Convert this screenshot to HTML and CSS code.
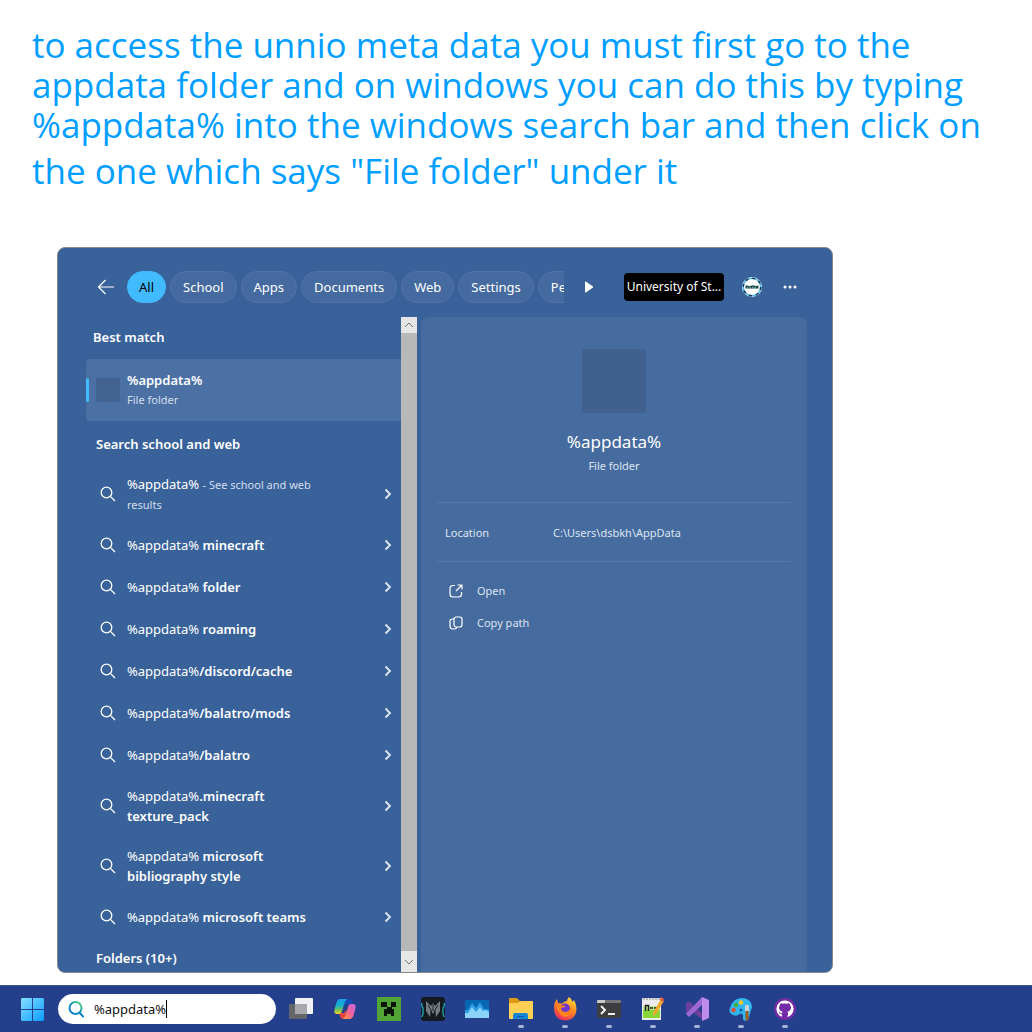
FILE: index.html
```html
<!DOCTYPE html>
<html lang="en">
<head>
<meta charset="utf-8">
<title>Opening the AppData folder</title>
<link rel="stylesheet" href="styles.css">
</head>
<body>
<svg class="defs" width="0" height="0" aria-hidden="true">
  <symbol id="search" viewBox="0 0 16 16"><circle cx="6.5" cy="6.5" r="5.3"/><path d="M10.4 10.4 15 15"/></symbol>
  <symbol id="chevron" viewBox="0 0 8 12"><path d="m1.5 1.5 4.500 4.500-4.500 4.500"/></symbol>
</svg>

<header class="caption">
  <p>to access the unnio meta data you must first go to the<br>appdata folder and on windows you can do this by typing<br>%appdata% into the windows search bar and then click on</p>
  <p class="caption-last">the one which says "File folder" under it</p>
</header>

<main class="window">
  <div class="toolbar">
    <button class="icon-button back" aria-label="Back"><svg width="18" height="16" viewBox="0 0 18 16"><path d="M17 8H1.500M8.500 1 1.500 8l7 7"/></svg></button>
    <nav class="tabs" aria-label="Filters">
      <button class="tab active">All</button>
      <button class="tab">School</button>
      <button class="tab">Apps</button>
      <button class="tab">Documents</button>
      <button class="tab">Web</button>
      <button class="tab">Settings</button>
      <button class="tab">People</button>
    </nav>
    <button class="icon-button next" aria-label="More filters"><svg width="10" height="12" viewBox="0 0 10 12"><path d="M1 1.500v9q0 1.300 1.200.7l6.500-4.500q.9-.7 0-1.400L2.200.8Q1 .2 1 1.500z"/></svg></button>
    <button class="account">University of St...</button>
    <svg class="avatar" width="20" height="20" viewBox="0 0 20 20" role="img" aria-label="Profile">
      <circle cx="10" cy="10" r="10" fill="#fff"/>
      <circle cx="10" cy="10" r="8.800" fill="none" stroke="#4bb8e6" stroke-width="1.600"/>
      <circle cx="10" cy="10" r="8.800" fill="none" stroke="#123d59" stroke-width="1.600" stroke-dasharray="3 3.900"/>
      <path fill="#174c4a" d="M3.500 8.500h2l2 .8 2-.8h3l1.500.6 2.500-.6v3h-13z"/><path stroke="#cfe5e0" stroke-width=".6" d="M5 10.300h10" stroke-dasharray="1.500 1"/>
    </svg>
    <button class="icon-button more" aria-label="More options"><svg width="14" height="4" viewBox="0 0 14 4"><circle cx="2" cy="2" r="1.500"/><circle cx="7" cy="2" r="1.500"/><circle cx="12" cy="2" r="1.500"/></svg></button>
  </div>

  <div class="panes">
    <section class="results">
      <h2 class="group best">Best match</h2>
      <a class="match" href="#">
        <span class="thumb"></span>
        <span class="match-text"><strong>%appdata%</strong><small>File folder</small></span>
      </a>
      <h2 class="group web">Search school and web</h2>
      <ul class="suggestions">
        <li><a class="row" href="#"><svg class="glass"><use href="#search"/></svg><span class="label">%appdata% <small>- See school and web results</small></span><svg class="chevron"><use href="#chevron"/></svg></a></li>
        <li><a class="row" href="#"><svg class="glass"><use href="#search"/></svg><span class="label">%appdata% <b>minecraft</b></span><svg class="chevron"><use href="#chevron"/></svg></a></li>
        <li><a class="row" href="#"><svg class="glass"><use href="#search"/></svg><span class="label">%appdata% <b>folder</b></span><svg class="chevron"><use href="#chevron"/></svg></a></li>
        <li><a class="row" href="#"><svg class="glass"><use href="#search"/></svg><span class="label">%appdata% <b>roaming</b></span><svg class="chevron"><use href="#chevron"/></svg></a></li>
        <li><a class="row" href="#"><svg class="glass"><use href="#search"/></svg><span class="label">%appdata%<b>/discord/cache</b></span><svg class="chevron"><use href="#chevron"/></svg></a></li>
        <li><a class="row" href="#"><svg class="glass"><use href="#search"/></svg><span class="label">%appdata%<b>/balatro/mods</b></span><svg class="chevron"><use href="#chevron"/></svg></a></li>
        <li><a class="row" href="#"><svg class="glass"><use href="#search"/></svg><span class="label">%appdata%<b>/balatro</b></span><svg class="chevron"><use href="#chevron"/></svg></a></li>
        <li><a class="row" href="#"><svg class="glass"><use href="#search"/></svg><span class="label">%appdata%<b>.minecraft<br>texture_pack</b></span><svg class="chevron"><use href="#chevron"/></svg></a></li>
        <li><a class="row" href="#"><svg class="glass"><use href="#search"/></svg><span class="label">%appdata% <b>microsoft<br>bibliography style</b></span><svg class="chevron"><use href="#chevron"/></svg></a></li>
        <li><a class="row" href="#"><svg class="glass"><use href="#search"/></svg><span class="label">%appdata% <b>microsoft teams</b></span><svg class="chevron"><use href="#chevron"/></svg></a></li>
      </ul>
      <h2 class="group folders">Folders (10+)</h2>
    </section>

    <div class="scrollbar">
      <button class="scroll-up" aria-label="Scroll up"><svg width="10" height="6" viewBox="0 0 10 6"><path d="m1 5 4-4 4 4"/></svg></button>
      <button class="scroll-down" aria-label="Scroll down"><svg width="10" height="6" viewBox="0 0 10 6"><path d="m1 1 4 4 4-4"/></svg></button>
    </div>

    <section class="details">
      <div class="preview"></div>
      <h1>%appdata%</h1>
      <p class="kind">File folder</p>
      <dl class="facts"><dt>Location</dt><dd>C:\Users\dsbkh\AppData</dd></dl>
      <div class="actions">
        <button class="action"><svg width="14" height="14" viewBox="0 0 14 14"><path d="M6 1.500H4Q1 1.500 1 4.500v5.500q0 3 3 3h5.500q3 0 3-3V8M8.500 1H13v4.500M13 1 7 7"/></svg>Open</button>
        <button class="action"><svg width="14" height="14" viewBox="0 0 14 14"><rect x="5" y="1" width="8" height="10" rx="2.200"/><path d="M5 3H3.500Q1 3 1 5.500V10q0 3 3 3h1.500q1.800 0 2.500-2"/></svg>Copy path</button>
      </div>
    </section>
  </div>
</main>

<footer class="taskbar">
  <button class="start" aria-label="Start"><svg width="24" height="24" viewBox="0 0 24 24"><defs><linearGradient id="win" x2="1" y2="1" gradientUnits="userSpaceOnUse" x1="0" y1="0" gradientTransform="scale(24)"><stop stop-color="#8be3ff"/><stop offset="1" stop-color="#0a9cff"/></linearGradient></defs><path fill="url(#win)" d="M2 1H12V12H1V2zM13 1H23l1 1v10H13zM1 13h11v11H2l-1-1zM13 13h11v10l-1 1H13z"/></svg></button>
  <label class="searchbox">
    <svg width="16" height="17" viewBox="0 0 16 17"><defs><linearGradient id="lens" x1="1" x2="0" y1="0" y2="1"><stop stop-color="#6be07a"/><stop offset=".4" stop-color="#1aa0a8"/><stop offset="1" stop-color="#1377dd"/></linearGradient></defs><circle cx="7.500" cy="7" r="6" fill="none" stroke="url(#lens)" stroke-width="2"/><path d="m11.500 11.500 3.500 4" stroke="#1583cf" stroke-width="2" stroke-linecap="round"/></svg>
    <input type="text" value="%appdata%" aria-label="Search"><span class="caret"></span>
  </label>
  <nav class="apps" aria-label="Taskbar apps">
    <button class="app" aria-label="Task view"><svg viewBox="0 0 24 24"><rect x="6" y="1" width="18" height="16" rx="1" fill="#f2f2f4"/><rect y="7" width="18" height="15" rx="1" fill="#646569"/><path fill="#a9a9ad" d="M6 7h12v10H6z"/></svg></button>
    <button class="app" aria-label="Copilot"><svg viewBox="0 0 24 24"><defs><linearGradient id="cp1" x2="0" y2="1"><stop stop-color="#189bea"/><stop offset=".45" stop-color="#18b4c9"/><stop offset=".75" stop-color="#7cc34a"/><stop offset="1" stop-color="#ffd22e"/></linearGradient><linearGradient id="cp2" x1="1" x2="0" y2="1"><stop stop-color="#c269e8"/><stop offset=".5" stop-color="#f0609a"/><stop offset="1" stop-color="#ff9b35"/></linearGradient></defs><path fill="#144cb8" d="M12 2h4q2 0 2.700 2l1 3H15q-3 0-4 3z"/><path fill="#e24440" d="M6 16h5l2-3v6l-1 3H10q-2 0-2.700-2z"/><path fill="url(#cp1)" d="M7 2h7q-1.500 1-2.300 3.500L9 14q-.8 3-3.500 3H3.500Q.5 16.500 1.500 12.500l2-7Q4.500 2 7 2z"/><path fill="url(#cp2)" d="M17 22h-7q1.500-1 2.300-3.500L15 10q.8-3 3.500-3h2q3 .5 2 4.500l-2 7Q19.500 22 17 22z"/></svg></button>
    <button class="app" aria-label="Minecraft"><svg viewBox="0 0 24 24"><path fill="#52a436" d="M0 0h24v24H0z"/><path fill="#071406" d="M4 5h6v5h4V5h5v5h-4v2h2v7h-3v-2h-4v2H7v-7h3v-2H4z"/></svg></button>
    <button class="app" aria-label="PredatorSense"><svg viewBox="0 0 24 24"><rect width="24" height="24" rx="3" fill="#141a20"/><path stroke="#1fb8c4" stroke-width="1.200" d="M.8 6v3l1.200 2v6l-1.200 3M23.200 6v3L22 11v6l1.200 3" fill="none"/><path fill="#777c82" d="m5 4 5 5 2-3 2 3 5-5v10l-4 6-1-7-2 4-2-4-1 7-4-6z"/><path stroke="#20262c" d="m7 8 3 5v4M17 8l-3 5v4M12 7v7" fill="none"/></svg></button>
    <button class="app" aria-label="System monitor"><svg viewBox="0 0 24 24"><rect y="3" width="24" height="18" rx="1" fill="#0867b5"/><path fill="#2b9be2" d="M0 13h3l4-7 4 5 4-6 4 7h5v5H0z"/><path fill="#8bd2fa" d="M0 16h3l4-6 4 5 4-5 3 4 3-1 3 2v6H0z"/></svg></button>
    <button class="app running" aria-label="File Explorer"><svg viewBox="0 0 24 24"><path fill="#dc9b12" d="M0 2q0-1 1-1h7l3 3h12v7H0z"/><path fill="#ffd053" d="M0 6h9l3-2h11q1 0 1 1v16q0 1-1 1H1q-1 0-1-1z"/><path fill="#1687d4" d="M4 22v-4q0-2 2-2h11q2 0 2 2v4z"/><path fill="#0b55a4" d="M8 19h7v1H8z"/></svg></button>
    <button class="app running" aria-label="Firefox"><svg viewBox="0 0 24 24"><defs><linearGradient id="fox" x1=".8" x2=".3" y2="1"><stop stop-color="#ffe23e"/><stop offset=".45" stop-color="#ff8a20"/><stop offset="1" stop-color="#f42962"/></linearGradient></defs><path fill="url(#fox)" d="M1 10Q1 5 4 2l1 4 4 .5Q11 4 14 4q0-2 2-4 3 2 3.500 5L21 3q2.500 4 2.500 9Q23 23 12 23.500 1 23 1 10z"/><circle cx="12" cy="11.500" r="5" fill="#6d38cc"/><path fill="#ff841c" d="M3 8q4 2 8 0l1 2-4 1q0 4 5 4 4-1 5-5 2 9-6 10-6-1-9-12z"/></svg></button>
    <button class="app running" aria-label="Terminal"><svg viewBox="0 0 24 24"><rect y="3" width="24" height="18" rx="1" fill="#3d3d3f"/><path fill="#c9c9c9" d="M0 4q0-1 1-1h7v3H0z"/><path fill="#77777a" d="M8 3h15q1 0 1 1v2H8z"/><path stroke="#eee" stroke-width="2" fill="none" d="m4 9 4 4-4 4M11 17h7"/></svg></button>
    <button class="app running" aria-label="Notepad++"><svg viewBox="0 0 24 24"><path fill="#ececec" d="M1 1h19v22H1z"/><path fill="#86d638" d="M2 13h17v8H2z"/><path fill="#bce98c" d="M2 9h17v4H2z"/><path stroke="#888" stroke-dasharray="2 1" d="M2 2h18"/><path stroke="#222" stroke-width="1.500" fill="none" d="M4.500 14V8.500h3V14M9 11h3M13 11h3"/><path fill="#f2a72e" d="m20 2 3 2-8 13-3 2 .5-4z"/><path fill="#df5a43" d="m20 0 3 2-1 3-3-2z"/></svg></button>
    <button class="app running" aria-label="Visual Studio"><svg viewBox="0 0 24 24"><path fill="#69409c" d="m1 6 3-2 14 13v6L5 13l-3 5-1-1z"/><path fill="#9b68d4" d="m1 17 16-17v8L4 20z"/><path fill="#bd8bea" d="m17 0 7 3v18l-7 3z"/></svg></button>
    <button class="app running" aria-label="Paint"><svg viewBox="0 0 24 24"><path fill="#31b6ed" d="M13 1c6 0 10 4 10 9l-4 13c-2 1-4 1-5-1v-4q-2-3-5 0-2 1-5 0-5-2-3-7Q4 1 13 1z"/><circle cx="7" cy="8" r="2.200" fill="#48ad35"/><circle cx="12" cy="5.500" r="2.200" fill="#ffc526"/><circle cx="4.500" cy="13" r="2.200" fill="#e94f32"/><circle cx="12" cy="13" r="1.500" fill="#12599e"/><path fill="#c8d0d7" d="M16 8h4v6h-4z"/><path fill="#a05c1f" d="M16.500 14h3v8q-1.500 4-3 0z"/></svg></button>
    <button class="app running" aria-label="GitHub Desktop"><svg viewBox="0 0 24 24"><circle cx="12" cy="12" r="11" fill="#752ba6"/><path fill="#fff" d="M12 4a8 8 0 0 0-3 15.500v-2.300q-2.300.4-3-1.500-.3-.8-1-1.200 1.200-.3 2 .9.800 1.200 2.100.7.100-.9.600-1.300-3.700-.6-3.700-4.200 0-1.500 1-2.500-.4-1.200.1-2.300 1.100 0 2.400 1 2.500-.6 5 0 1.300-1 2.400-1 .5 1.100.1 2.300 1 1 1 2.500 0 3.600-3.700 4.200.7.500.7 1.900v2.800A8 8 0 0 0 12 4z"/><circle cx="12" cy="12" r="7.800" fill="none" stroke="#fff" stroke-width="1.500" stroke-dasharray="43 6" transform="rotate(113 12 12)"/></svg></button>
  </nav>
</footer>
</body>
</html>
```

FILE: styles.css
```css
* { box-sizing: border-box; }

body {
  display: flex;
  flex-direction: column;
  min-height: 100vh;
  margin: 0;
  background: #fff;
  font: 13px/20px "Noto Sans", sans-serif;
}

h1, h2, p, ul, dl, dd { margin: 0; padding: 0; }
ul { list-style: none; }
a { color: inherit; text-decoration: none; }
button { padding: 0; border: 0; background: none; color: inherit; font: inherit; }
svg { display: block; flex: none; }
.defs { position: absolute; }

.caption {
  padding: 25px 32px 56px;
  color: #009fff;
  font: 35px/40px "Open Sans", sans-serif;
  white-space: nowrap;
}
.caption-last { padding-top: 6px; }

.window {
  width: calc(100% - 256px);
  margin: 0 0 12px 57px;
  overflow: hidden;
  border: 1px solid #858b91;
  border-radius: 8px;
  background: #3a629a;
  color: #fff;
}

.toolbar {
  display: flex;
  align-items: center;
  height: 69px;
  padding: 9px 35px 0 39px;
}
.icon-button svg { fill: #fff; }
.icon-button.back svg { fill: none; stroke: #fff; stroke-width: 1.2; }
.tabs {
  display: flex;
  flex: 1;
  gap: 4px;
  min-width: 0;
  margin-left: 12px;
  overflow: hidden;
}
.tab {
  flex: none;
  height: 32px;
  padding: 0 11px;
  border: 1px solid #5273a6;
  border-radius: 16px;
  background: #446a9f;
}
.tab:not(.active) { padding: 0 12px; }
.tab.active { border-color: #42baff; background: #42baff; color: #000; }
.next { margin: 0 30px 0 20px; }
.account {
  width: 100px;
  height: 28px;
  border-radius: 4px;
  background: #000;
  font-size: 12px;
  white-space: nowrap;
}
.avatar { margin: 0 21px 0 18px; }

.panes {
  display: grid;
  grid-template-columns: minmax(0, 343fr) 16px minmax(0, 390fr);
  padding-right: 25px;
}

.group { font-size: 13px; line-height: 20px; font-weight: 600; }
.best { padding: 10px 0 12px 35px; }
.web { padding: 13px 0 10px 38px; }
.folders { padding: 10px 0 4px 38px; }

.match {
  display: flex;
  align-items: center;
  gap: 7px;
  height: 62px;
  margin-left: 28px;
  border-radius: 4px 0 0 4px;
  background: #4b70a4;
}
.match::before {
  width: 3px;
  height: 24px;
  border-radius: 2px;
  background: #42baff;
  content: "";
}
.thumb { width: 24px; height: 24px; border-radius: 2px; background: #426292; }
.match-text { display: grid; }
.match strong { font-weight: 600; }
small { color: #d3deed; font-size: 11px; }
.label small { line-height: 16px; }

.row {
  display: flex;
  align-items: center;
  min-height: 42px;
  padding: 10px 9px 10px 42px;
}
.glass {
  width: 16px;
  height: 16px;
  margin-right: 11px;
  fill: none;
  stroke: #fff;
  stroke-width: 1.3;
}
.label { width: 200px; margin-right: auto; }
.label b { font-weight: 600; }
.chevron {
  width: 8px;
  height: 12px;
  fill: none;
  stroke: #e1e8f2;
  stroke-width: 1.8;
}

.scrollbar {
  display: flex;
  flex-direction: column;
  justify-content: space-between;
  background: #b8b8b8;
}
.scrollbar button {
  display: grid;
  place-items: center;
  height: 16px;
  background: #e6e6e6;
}
.scrollbar .scroll-down { height: 21px; }
.scrollbar svg { fill: none; stroke: #747474; }

.details {
  margin-left: 4px;
  padding: 32px 16px;
  border-radius: 8px 8px 0 0;
  background: #466b9f;
  text-align: center;
}
.preview {
  width: 64px;
  height: 64px;
  margin: 0 auto;
  border-radius: 2px;
  background: #406090;
}
.details h1 { padding-top: 16px; font-size: 17px; line-height: 26px; font-weight: 400; }
.kind, .facts, .action { color: #dce5f1; font-size: 11px; }
.kind { padding: 1px 0 26px; }
.facts {
  display: grid;
  grid-template-columns: 108px 1fr;
  padding: 20px 8px 18px;
  border: solid #5577ad;
  border-width: 1px 0;
  text-align: left;
}
.actions { display: grid; gap: 12px; justify-items: start; padding: 19px 12px; }
.action { display: flex; align-items: center; gap: 14px; }
.action svg { fill: none; stroke: #fff; stroke-width: 1.2; }

.taskbar {
  display: flex;
  align-items: center;
  height: 47px;
  margin-top: auto;
  padding-left: 20px;
  border-top: 1px solid #3b5687;
  background: #24408d;
}
.searchbox {
  display: flex;
  align-items: center;
  width: 218px;
  height: 30px;
  margin-left: 14px;
  padding-left: 10px;
  border-radius: 15px;
  background: #fff;
}
.searchbox input {
  field-sizing: content;
  min-width: 0;
  margin: 0 0 0 10px;
  padding: 0;
  border: 0;
  outline: 0;
  background: none;
  color: #111;
  font: inherit;
}
.caret { width: 1px; height: 18px; background: #000; }
.apps { display: flex; gap: 20px; margin-left: 13px; }
.app { position: relative; width: 24px; height: 24px; }
.running::after {
  position: absolute;
  top: 28px;
  left: 9px;
  width: 6px;
  height: 3px;
  border-radius: 2px;
  background: #a5b3d4;
  content: "";
}
```
